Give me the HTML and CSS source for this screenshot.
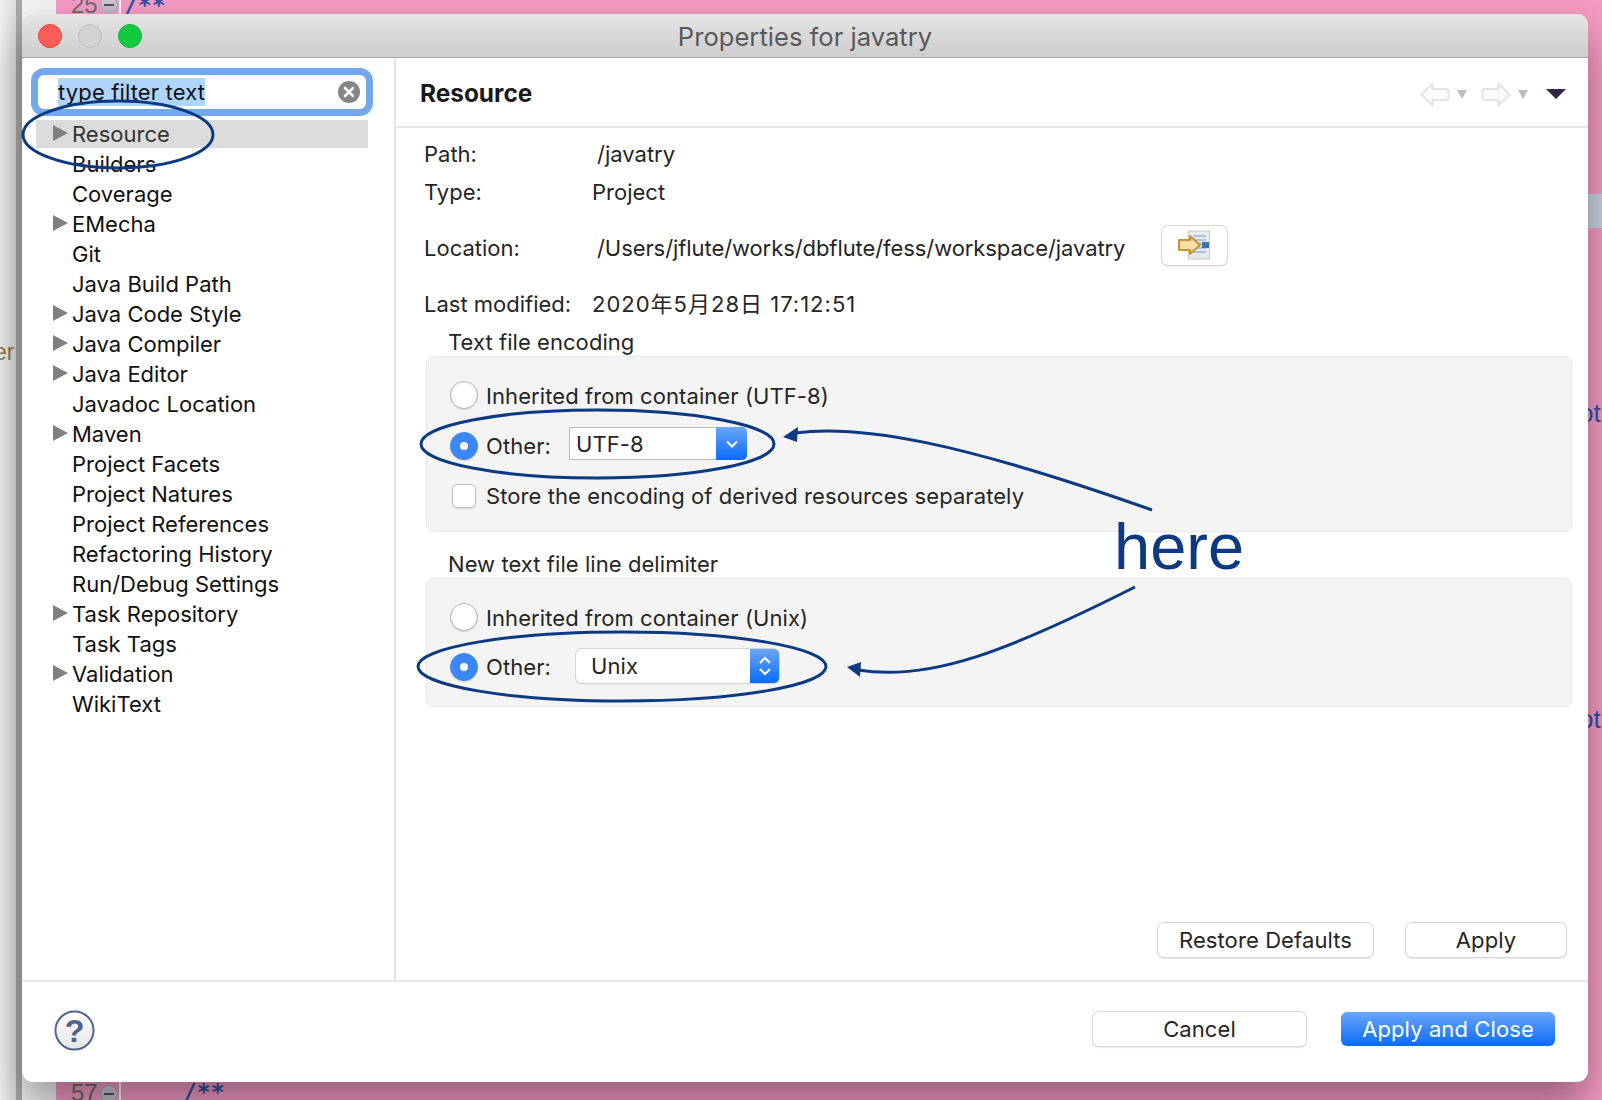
FILE: index.html
```html
<!DOCTYPE html>
<html lang="en">
<head>
 <meta charset="UTF-8">
 <title>Properties for javatry</title>
 <link rel="stylesheet" href="styles.css">
</head>
<body>

 <!-- editor peeking out behind the dialog -->
 <div class="backdrop">
  <div class="band"></div>
  <span class="code lineno lineno-top">25</span>
  <span class="fold fold-top"></span>
  <span class="code comment comment-top">/**</span>
  <span class="code lineno lineno-bottom">57</span>
  <span class="fold fold-bottom"></span>
  <span class="code comment comment-bottom">/**</span>
  <span class="code side-left">er</span>
  <span class="code side-right side-right-a">ot</span>
  <span class="code side-right side-right-b">ot</span>
 </div>

 <div class="window">
  <div class="titlebar">
   <div class="lights">
    <span class="light red"></span>
    <span class="light grey"></span>
    <span class="light green"></span>
   </div>
   <div class="title">Properties for javatry</div>
  </div>

  <div class="main">
   <div class="sidebar">
    <div class="search">
     <span class="search-text">type filter text</span>
     <svg class="search-clear" width="22" height="22" viewBox="0 0 22 22">
      <circle cx="11" cy="11" r="11" fill="#858585"/>
      <path d="M7 7l8 8M15 7l-8 8" stroke="#fff" stroke-width="2.6" stroke-linecap="round"/>
     </svg>
    </div>
    <div class="tree">
     <div class="tree-row selected"><i class="twisty"></i>Resource</div>
     <div class="tree-row"><i class="no-twisty"></i>Builders</div>
     <div class="tree-row"><i class="no-twisty"></i>Coverage</div>
     <div class="tree-row"><i class="twisty"></i>EMecha</div>
     <div class="tree-row"><i class="no-twisty"></i>Git</div>
     <div class="tree-row"><i class="no-twisty"></i>Java Build Path</div>
     <div class="tree-row"><i class="twisty"></i>Java Code Style</div>
     <div class="tree-row"><i class="twisty"></i>Java Compiler</div>
     <div class="tree-row"><i class="twisty"></i>Java Editor</div>
     <div class="tree-row"><i class="no-twisty"></i>Javadoc Location</div>
     <div class="tree-row"><i class="twisty"></i>Maven</div>
     <div class="tree-row"><i class="no-twisty"></i>Project Facets</div>
     <div class="tree-row"><i class="no-twisty"></i>Project Natures</div>
     <div class="tree-row"><i class="no-twisty"></i>Project References</div>
     <div class="tree-row"><i class="no-twisty"></i>Refactoring History</div>
     <div class="tree-row"><i class="no-twisty"></i>Run/Debug Settings</div>
     <div class="tree-row"><i class="twisty"></i>Task Repository</div>
     <div class="tree-row"><i class="no-twisty"></i>Task Tags</div>
     <div class="tree-row"><i class="twisty"></i>Validation</div>
     <div class="tree-row"><i class="no-twisty"></i>WikiText</div>
    </div>
   </div>

   <div class="content">
    <div class="content-head">
     <h1 class="content-title">Resource</h1>
     <div class="nav">
      <svg width="30" height="25" viewBox="0 0 30 25">
       <path d="M1.5 12.5L12.5 1.5V7H26a2.5 2.5 0 0 1 2.5 2.5v6A2.5 2.5 0 0 1 26 18H12.5v5.5z" fill="#fbfbfb" stroke="#e4e4e4" stroke-width="2" stroke-linejoin="round"/>
      </svg>
      <i class="nav-tri"></i>
      <svg class="nav-next" width="30" height="25" viewBox="0 0 30 25">
       <path d="M28.5 12.5L17.5 1.5V7H4a2.5 2.5 0 0 0-2.5 2.5v6A2.5 2.5 0 0 0 4 18h13.5v5.5z" fill="#fbfbfb" stroke="#e4e4e4" stroke-width="2" stroke-linejoin="round"/>
      </svg>
      <i class="nav-tri"></i>
      <i class="menu-tri"></i>
     </div>
    </div>

    <div class="props">
     <div class="info-row"><span class="info-label wide">Path:</span><span>/javatry</span></div>
     <div class="info-row"><span class="info-label">Type:</span><span>Project</span></div>
     <div class="info-row location"><span class="info-label wide">Location:</span><span class="path">/Users/jflute/works/dbflute/fess/workspace/javatry</span>
      <button class="btn icon-btn">
       <svg width="34" height="30" viewBox="0 0 34 30">
        <rect x="10.5" y="1" width="21" height="28" fill="#e4ecf3" stroke="#cfc9ad"/>
        <path d="M15 6h13M15 10h13M15 14h13M15 18h13M15 22h13" stroke="#9db4cc" stroke-width="1.6"/>
        <rect x="24" y="12" width="7" height="6" fill="#3f72ad"/>
        <path d="M1 10h11V6l10 9-10 9v-4H1z" fill="#f7dfa8" stroke="#c8923a" stroke-width="2" stroke-linejoin="round"/>
       </svg>
      </button>
     </div>
     <div class="info-row"><span class="info-label">Last modified:</span><span class="date">2020年5月28日 17:12:51</span></div>

     <div class="group-label">Text file encoding</div>
     <div class="group">
      <div class="opt"><i class="radio"></i>Inherited from container (UTF-8)</div>
      <div class="opt"><i class="radio on"></i><span class="other">Other:</span>
       <div class="select combo">
        <span class="select-text">UTF-8</span>
        <span class="select-btn">
         <svg width="14" height="10" viewBox="0 0 14 10"><path d="M2 2.5l5 5 5-5" fill="none" stroke="#fff" stroke-width="2"/></svg>
        </span>
       </div>
      </div>
      <div class="opt"><i class="check"></i>Store the encoding of derived resources separately</div>
     </div>

     <div class="group-label second">New text file line delimiter</div>
     <div class="group tight">
      <div class="opt"><i class="radio"></i>Inherited from container (Unix)</div>
      <div class="opt"><i class="radio on"></i><span class="other long">Other:</span>
       <div class="select popup">
        <span class="select-text">Unix</span>
        <span class="select-btn">
         <svg width="14" height="24" viewBox="0 0 14 24"><path d="M2 9l5-5 5 5M2 15l5 5 5-5" fill="none" stroke="#fff" stroke-width="2"/></svg>
        </span>
       </div>
      </div>
     </div>
    </div>

    <div class="actions">
     <button class="btn restore">Restore Defaults</button>
     <button class="btn apply">Apply</button>
    </div>
   </div>
  </div>

  <div class="footer">
   <svg class="help" width="41" height="41" viewBox="0 0 42 42">
    <defs>
     <linearGradient id="helpFill" x1="0" y1="0" x2="0" y2="1">
      <stop offset="0" stop-color="#ffffff"/>
      <stop offset="1" stop-color="#e6e6e6"/>
     </linearGradient>
    </defs>
    <circle cx="21" cy="21" r="19.5" fill="url(#helpFill)" stroke="#4b6487" stroke-width="2"/>
    <text x="21" y="33" text-anchor="middle" class="help-mark">?</text>
   </svg>
   <div class="footer-btns">
    <button class="btn cancel">Cancel</button>
    <button class="btn primary">Apply and Close</button>
   </div>
  </div>
 </div>

 <!-- hand drawn annotations on top of the screenshot -->
 <svg class="marks" width="1602" height="1100" viewBox="0 0 1602 1100">
  <g fill="none" stroke="#0b3a82" stroke-width="3">
   <ellipse cx="118" cy="134.5" rx="95" ry="33.5"/>
   <ellipse cx="597.5" cy="444" rx="176.5" ry="34"/>
   <ellipse cx="622" cy="666.5" rx="204" ry="34.5"/>
   <path d="M795 433C860 424 960 442 1152 510"/>
   <path d="M858 670C930 682 1010 650 1135 587"/>
  </g>
  <path d="M783 437L798 427L797 442z" fill="#0b3a82"/>
  <path d="M847 667L861 662L860 677z" fill="#0b3a82"/>
 </svg>
 <div class="here">here</div>

</body>
</html>
```

FILE: styles.css
```css
* {
 box-sizing: border-box;
}

html, body {
 margin: 0;
 height: 1100px;
 overflow: hidden;
}

body {
 position: relative;
 display: flex;
 padding: 14px 14px 18px 22px;
 font-family: Inter, "Noto Sans CJK JP", sans-serif;
 font-size: 22px;
 color: #252525;
 background: #f49ac3;
}

/* backdrop */
.backdrop {
 position: absolute;
 top: 0;
 left: 0;
 right: 0;
 bottom: 0;
 overflow: hidden;
 background: linear-gradient(90deg, #f0f0f0 0, #dcdcdc 16px, #a8a8a3 16px, #a8a8a3 22px, #f2f2f2 22px, #f2f2f2 56px, #f49ac3 56px, #f49ac3 119px, #fff 119px, #fff 121px, #f49ac3 121px);
}

.band {
 position: absolute;
 top: 194px;
 right: 0;
 width: 14px;
 height: 34px;
 background: #c6d2de;
}

.code {
 position: absolute;
 line-height: 30px;
 font-family: "Liberation Sans", sans-serif;
}

.lineno {
 left: 71px;
 color: #6a6a6a;
 font-size: 24px;
}

.lineno-top {
 top: -10px;
}

.lineno-bottom {
 top: 1078px;
}

.comment {
 color: #2f4fa8;
 font-family: "DejaVu Sans Mono", monospace;
 font-size: 23px;
 font-weight: bold;
}

.comment-top {
 top: -10px;
 left: 124px;
}

.comment-bottom {
 top: 1077px;
 left: 183px;
}

.fold {
 position: absolute;
 left: 100px;
 width: 18px;
 height: 18px;
 border: 1px solid #b0a8bc;
 border-radius: 50%;
 background: linear-gradient(#d4ccdc, #bcb4c8);
}

.fold::after {
 content: "";
 position: absolute;
 left: 3px;
 top: 7px;
 width: 10px;
 height: 2px;
 background: #555;
}

.fold-top {
 top: -4px;
}

.fold-bottom {
 top: 1085px;
}

.side-left {
 top: 337px;
 left: -6px;
 color: #8e7a3e;
 font-size: 23px;
}

.side-right {
 left: 1579px;
 color: #2f4fa8;
 font-size: 26px;
}

.side-right-a {
 top: 398px;
}

.side-right-b {
 top: 704px;
}

/* window */
.window {
 position: relative;
 flex: 1;
 display: flex;
 flex-direction: column;
 overflow: hidden;
 background: #fff;
 border-radius: 11px;
 box-shadow: 0 22px 40px rgba(0, 0, 0, .38);
}

.titlebar {
 display: grid;
 grid-template-columns: 1fr auto 1fr;
 align-items: center;
 height: 44px;
 padding: 0 16px;
 background: linear-gradient(#e5e5e5, #cdcdcd);
 border-bottom: 1px solid #a6a6a6;
}

.lights {
 display: flex;
 gap: 16px;
}

.light {
 width: 24px;
 height: 24px;
 border-radius: 50%;
}

.light.red {
 background: #fc5b57;
 border: 1px solid #e3473f;
}

.light.grey {
 background: #d2d2d2;
 border: 1px solid #bdbdbd;
}

.light.green {
 background: #14c93f;
 border: 1px solid #12b338;
}

.title {
 padding-top: 2px;
 font-size: 25.6px;
 color: #585858;
}

.main {
 flex: 1;
 display: flex;
 min-height: 0;
}

/* left tree */
.sidebar {
 width: 374px;
 padding-top: 10px;
 border-right: 2px solid #e6e6e6;
}

.search {
 display: flex;
 align-items: center;
 justify-content: space-between;
 width: 342px;
 height: 48px;
 margin-left: 9px;
 padding: 0 6px 0 20px;
 background: #fff;
 border: 7px solid #73a8ef;
 border-radius: 13px;
}

.search-text {
 background: #b0d5fd;
 color: #111;
 line-height: 28px;
 letter-spacing: .14px;
}

.tree {
 width: 332px;
 margin: 4px 0 0 14px;
}

.tree-row {
 display: flex;
 align-items: center;
 height: 28px;
 margin-bottom: 2px;
 padding-left: 17px;
 color: #111;
 white-space: nowrap;
}

.tree-row.selected {
 margin-top: 1px;
 margin-bottom: 1px;
 background: #dcdcdc;
 color: #333;
}

.tree-row + .tree-row {
 padding-top: 2px;
}

.twisty {
 width: 0;
 height: 0;
 margin-right: 4px;
 margin-top: -2px;
 border-left: 15px solid #808080;
 border-top: 8px solid transparent;
 border-bottom: 8px solid transparent;
}

.no-twisty {
 width: 19px;
}

/* right side */
.content {
 flex: 1;
 display: flex;
 flex-direction: column;
 min-width: 0;
}

.content-head {
 display: flex;
 align-items: center;
 justify-content: space-between;
 height: 70px;
 padding: 2px 22px 0 24px;
 border-bottom: 2px solid #e6e6e6;
}

.content-title {
 margin: 0;
 font-size: 24.4px;
 font-weight: 700;
 color: #1a1a1a;
}

.nav {
 display: flex;
 align-items: center;
 padding-top: 2px;
}

.nav-tri {
 width: 0;
 height: 0;
 margin-left: 7px;
 border-top: 9px solid #bcbcbc;
 border-left: 5px solid transparent;
 border-right: 5px solid transparent;
}

.nav-next {
 margin-left: 14px;
}

.menu-tri {
 width: 0;
 height: 0;
 margin-left: 18px;
 border-top: 10px solid #33244a;
 border-left: 10px solid transparent;
 border-right: 10px solid transparent;
}

.props {
 padding: 7px 16px 0 28px;
}

.info-row {
 display: flex;
 align-items: baseline;
 height: 38px;
 line-height: 38px;
}

.info-row.location {
 align-items: center;
 height: 74px;
}

.info-label {
 width: 168px;
}

.info-label.wide {
 width: 173px;
}

.path {
 letter-spacing: -.08px;
}

.date {
 letter-spacing: 1px;
}

.group-label {
 height: 28px;
 margin-top: 5px;
 padding-left: 24px;
 line-height: 28px;
 letter-spacing: .06px;
}

.group-label.second {
 margin-top: 18px;
}

.group {
 display: flex;
 flex-direction: column;
 gap: 18px;
 margin-left: 2px;
 padding: 23px 0 19px 23px;
 background: #f4f4f4;
 border: 1px solid #ebebeb;
 border-radius: 7px;
}

.group.tight {
 gap: 17px;
 padding-bottom: 23px;
}

.opt {
 display: flex;
 align-items: center;
 height: 32px;
 letter-spacing: .08px;
}

.radio {
 width: 28px;
 height: 28px;
 margin-right: 8px;
 background: #fff;
 border: 1px solid #b4b4b4;
 border-radius: 50%;
 box-shadow: 0 1px 1px rgba(0, 0, 0, .12);
}

.opt:first-child .radio {
 margin-top: -2px;
}

.radio.on {
 position: relative;
 background: #3b87f6;
 border-color: #3b87f6;
}

.radio.on::after {
 content: "";
 position: absolute;
 left: 9px;
 top: 9px;
 width: 8px;
 height: 8px;
 border-radius: 50%;
 background: #fff;
}

.check {
 width: 24px;
 height: 24px;
 margin: 0 10px 0 2px;
 background: #fff;
 border: 1px solid #bcbcbc;
 border-radius: 5px;
 box-shadow: 0 1px 1px rgba(0, 0, 0, .1);
}

.other {
 width: 83px;
}

.other.long {
 width: 90px;
}

.select {
 display: flex;
 align-items: center;
 justify-content: space-between;
 background: #fff;
}

.select.combo {
 width: 178px;
 height: 33px;
 margin-top: -5px;
 padding-left: 6px;
 border: 1px solid #b9b9b9;
 border-right: 0;
 border-radius: 0 5px 5px 0;
}

.select.popup {
 width: 203px;
 height: 34px;
 margin-top: -2px;
 padding-left: 15px;
 border-radius: 6px;
 box-shadow: 0 0 0 1px #d6d6d6, 0 1px 1px rgba(0, 0, 0, .25);
}

.select-btn {
 display: flex;
 align-items: center;
 justify-content: center;
 align-self: stretch;
 background: linear-gradient(#6aa6fb, #0a6bf7);
 border-radius: 0 5px 5px 0;
}

.combo .select-btn {
 width: 31px;
 margin: -1px 0;
}

.popup .select-btn {
 width: 29px;
}

.actions {
 display: flex;
 justify-content: flex-end;
 gap: 33px;
 margin-top: auto;
 padding: 0 22px 23px 0;
}

.btn {
 height: 34px;
 padding: 0;
 font: inherit;
 letter-spacing: .1px;
 color: #252525;
 background: #fff;
 border: 0;
 border-radius: 6px;
 box-shadow: 0 0 0 1px #d8d8d8, 0 1px 2px rgba(0, 0, 0, .28);
}

.icon-btn {
 display: flex;
 align-items: center;
 justify-content: center;
 width: 65px;
 height: 39px;
 margin: -6px 0 0 37px;
}

.restore {
 width: 215px;
}

.apply {
 width: 160px;
}

.footer {
 display: flex;
 align-items: center;
 justify-content: space-between;
 height: 102px;
 padding: 0 33px 0 32px;
 border-top: 2px solid #e6e6e6;
}

.help {
 margin-top: -4px;
}

.help-mark {
 font-family: "Liberation Sans", sans-serif;
 font-size: 33px;
 font-weight: 700;
 fill: #4b6487;
}

.footer-btns {
 display: flex;
 gap: 35px;
 margin-top: -6px;
}

.cancel {
 width: 213px;
}

.primary {
 width: 214px;
 color: #fff;
 background: linear-gradient(#6aa6fb, #0a6bf7);
 box-shadow: none;
}

/* annotations */
.marks {
 position: absolute;
 top: 0;
 left: 0;
}

.here {
 position: absolute;
 left: 1114px;
 top: 511px;
 font-family: "Liberation Sans", sans-serif;
 font-size: 65px;
 line-height: 72px;
 color: #0b3a82;
}
```
